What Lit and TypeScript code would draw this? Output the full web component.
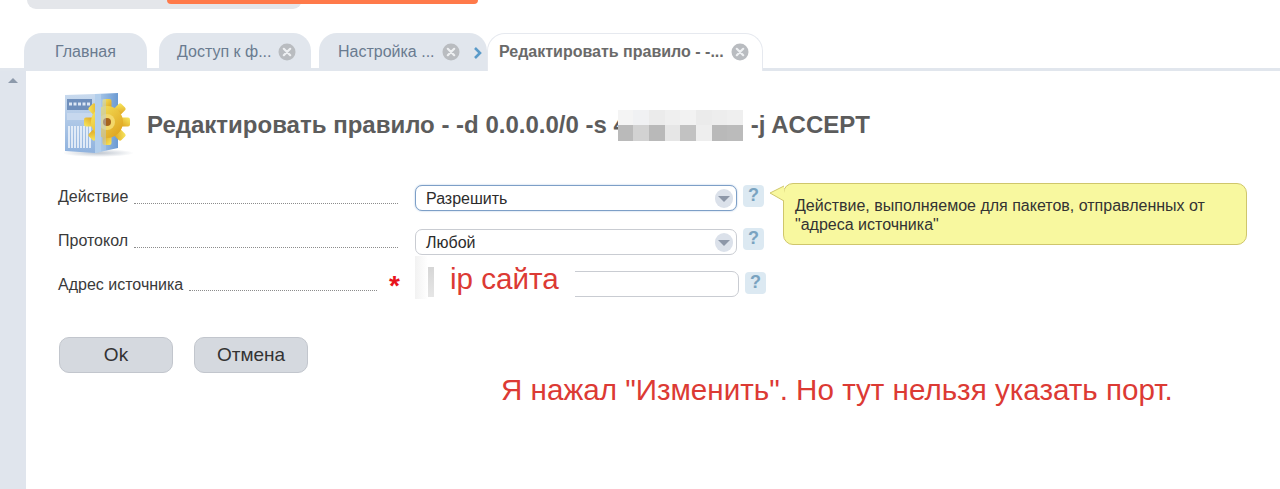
import { LitElement, html, css, svg } from "lit";
import { customElement } from "lit/decorators.js";

const closeIcon = html`<svg class="close" viewBox="0 0 18 18"><circle cx="9" cy="9" r="8.5" fill="#b9bcc0"/><path d="M5.8 5.8l6.4 6.4M12.2 5.8l-6.4 6.4" stroke="#eef0f2" stroke-width="2.2" stroke-linecap="round"/></svg>`;

const topCells = ["#f4f4f4", "#f0f1f3", "#ebebeb", "#efefef", "#f2f2f2", "#ebebeb", "#ededed", "#efefef"];
const bottomCells = ["#bababa", "#d2d2d2", "#b9b9b9", "#e6e6e6", "#c2c2c2", "#eeeeee", "#b9b9b9", "#bbbbbb"];

const teeth = [0, 45, 90, 135, 180, 225, 270, 315];
const serverIcon = html`<svg class="icon" viewBox="0 0 72 70">
  <defs>
    <linearGradient id="front" x1="0" y1="0" x2="0" y2="1"><stop offset="0" stop-color="#c9daee"/><stop offset="1" stop-color="#8fb2de"/></linearGradient>
    <linearGradient id="side" x1="0" y1="0" x2="1" y2="0"><stop offset="0" stop-color="#b3cfec"/><stop offset="1" stop-color="#6b9ad2"/></linearGradient>
    <linearGradient id="gear" x1="0" y1="0" x2="1" y2="1"><stop offset="0" stop-color="#f8ea62"/><stop offset="1" stop-color="#dc9c18"/></linearGradient>
    <radialGradient id="shadow"><stop offset="0" stop-color="#8a97a8" stop-opacity=".55"/><stop offset="1" stop-color="#8a97a8" stop-opacity="0"/></radialGradient>
  </defs>
  <ellipse cx="34" cy="62" rx="36" ry="4" fill="url(#shadow)"/>
  <path d="M1 4L31 3V62L1 60Z" fill="url(#front)"/>
  <path d="M31 3L54 2V57L31 62Z" fill="url(#side)"/>
  <rect x="3" y="8" width="25" height="11" fill="#6f8fbc"/>
  <path d="M5 13h21" stroke="#dce6f4" stroke-width="3" stroke-dasharray="3 1.5"/>
  <rect x="3" y="22" width="25" height="7" fill="#c7d8ee"/>
  <path d="M5 35V57M8 35V57M11 35V57M14 35V57M17 35V57M20 35V57M23 35V57M26 35V57" stroke="#f1f6fc" stroke-width="1.6"/>
  <g transform="translate(43 31)">
    ${teeth.map((a) => svg`<rect x="-4.5" y="-23" width="9" height="11" rx="2" fill="url(#gear)" transform="rotate(${a})"/>`)}
    <circle r="16" fill="url(#gear)"/>
    <circle r="8" fill="#f3d86a"/>
    <circle r="4" fill="#a8641c"/>
  </g>
  <path d="M31 3H37V61L31 62Z" fill="#b3cfec"/>
  <path d="M37 8H42V60L37 60Z" fill="#b3cfec" opacity=".45"/>
</svg>`;

@customElement("app-root")
export class AppRoot extends LitElement {
  static styles = css`
    :host { display: block; width: 1280px; height: 489px; overflow: hidden; background: #fff; position: relative; font-family: "Liberation Sans", Arial, sans-serif; color: #333; }
    .top { height: 33px; padding-left: 27px; overflow: hidden; box-sizing: border-box; }
    .pill { width: 275px; height: 9px; background: #e4e6ea; border-radius: 0 0 22px 22px; padding-left: 140px; box-sizing: border-box; }
    .pill div { width: 311px; height: 4px; background: #ff7a4a; border-radius: 0 0 10px 10px; }

    .tabs { display: flex; align-items: flex-end; height: 35px; padding-left: 24px; border-bottom: 3px solid #e1e6ed; }
    .tab { height: 35px; box-sizing: border-box; background: #e1e6ed; border-radius: 18px 18px 0 0; display: flex; align-items: center; font-size: 16px; color: #6a7b90; white-space: nowrap; padding-top: 2px; }
    .t1 { width: 123px; padding-left: 31px; margin-right: 12px; }
    .t2 { width: 152px; padding-left: 18px; margin-right: 8px; }
    .t3 { width: 168px; padding-left: 19px; }
    .close { width: 18px; height: 18px; flex: none; margin-left: 7px; }
    .chev { width: 10px; height: 14px; flex: none; margin-left: 13px; margin-top: 2px; }
    .active { width: 276px; height: 38px; margin-bottom: -3px; background: #fff; border: 1px solid #e6e9ef; border-bottom: none; padding: 0 0 1px 11px; font-size: 16px; font-weight: bold; color: #6a6a6a; }

    .body { display: flex; height: 418px; }
    .side { width: 26px; flex: none; background: #e0e5ed; display: flex; justify-content: center; padding-top: 7px; box-sizing: border-box; }
    .up { width: 0; height: 0; border-left: 5px solid transparent; border-right: 5px solid transparent; border-bottom: 5px solid #8d9aab; }
    .main { flex: 1; padding: 21px 0 0 32px; }

    .head { display: flex; align-items: center; height: 68px; margin-left: 6px; }
    .icon { width: 72px; height: 70px; flex: none; margin-right: 11px; }
    h1 { margin: -2px 0 0; font-size: 24px; font-weight: bold; color: #5c5c5c; display: flex; align-items: center; white-space: nowrap; }
    .patch { display: grid; grid-template-columns: repeat(8, 15.625px); grid-template-rows: 15px 16px; margin: 0 8px 0 -9px; position: relative; }

    form { margin: 25px 0 0; }
    .row { display: flex; align-items: flex-start; height: 26px; font-size: 16px; }
    .row + .row { margin-top: 18px; }
    .row.addr { margin-top: 16px; }
    .label { width: 340px; display: flex; align-items: flex-end; height: 26px; flex: none; padding-bottom: 5px; box-sizing: border-box; color: #3a3a3a; }
    .dots { flex: 1; border-bottom: 1px dotted #8c8c8c; margin: 0 0 0 6px; height: 0; position: relative; top: -2px; }
    .addr .label { width: 319px; padding-bottom: 3px; }
    .addr .dots { top: -3px; }
    .star { width: 38px; flex: none; box-sizing: border-box; padding-left: 12px; color: #e8141c; font-size: 28px; font-weight: bold; line-height: 29px; height: 26px; }
    .gap { width: 17px; flex: none; }
    .select { width: 322px; height: 26px; box-sizing: border-box; border: 1px solid #c9ccd2; border-radius: 7px; display: flex; align-items: center; justify-content: space-between; padding: 0 3px 0 10px; font-size: 16px; color: #2c2c2c; background: #fff; flex: none; }
    .select span.txt { position: relative; top: 1px; }
    .select.focus { border: 1px solid #7d9fc7; box-shadow: 0 0 2px #a9c2df; }
    .arrow { width: 18px; height: 19px; border-radius: 9px; background: #dbe1ea; display: flex; align-items: center; justify-content: center; }
    .arrow i { display: block; width: 0; height: 0; margin-top: 2px; border-left: 6px solid transparent; border-right: 6px solid transparent; border-top: 6px solid #8d97a8; }
    .input { width: 324px; height: 26px; box-sizing: border-box; border: 1px solid #c9ccd2; border-radius: 7px; flex: none; background: #fff; }
    .help { width: 21px; height: 22px; margin-left: 6px; border-radius: 4px; background: #dce9f2; color: #7aa3c0; font: bold 18px/21px "Liberation Sans", Arial, sans-serif; text-align: center; flex: none; }
    .addr .help { margin-top: 1px; }
    .row:nth-child(2) .help { margin-top: -1px; }

    .buttons { display: flex; gap: 21px; margin: 40px 0 0 1px; }
    .btn { width: 114px; height: 36px; box-sizing: border-box; background: #d5d9df; border: 1px solid #c2c6cd; border-radius: 10px; font-size: 19px; color: #333; display: flex; align-items: center; justify-content: center; }

    .tip { position: absolute; left: 783px; top: 183px; width: 464px; height: 62px; box-sizing: border-box; background: #f8f89f; border: 1px solid #cfc66c; border-radius: 10px; padding: 12px 11px 0; font-size: 16px; line-height: 19px; color: #333; }
    .tip svg { position: absolute; left: -14px; top: 1px; width: 15px; height: 17px; }
    .wipe { position: absolute; left: 415px; top: 256px; width: 160px; height: 43px; background: linear-gradient(90deg, #f2f2f2 0, #fff 8%, #fff 100%); }
    .smudge { position: absolute; left: 428px; top: 267px; width: 6px; height: 30px; background: linear-gradient(#d6d6d6, #e6e6e6); }
    .ip { position: absolute; left: 450px; top: 263px; font-size: 29.6px; line-height: 31px; color: #dc3a34; }
    .note { position: absolute; left: 501px; top: 375px; font-size: 29.6px; line-height: 30px; color: #dc3a34; white-space: nowrap; }
  `;

  render() {
    return html`
      <div class="top"><div class="pill"><div></div></div></div>
      <div class="tabs">
        <div class="tab t1">Главная</div>
        <div class="tab t2">Доступ к ф...${closeIcon}</div>
        <div class="tab t3">Настройка ...${closeIcon}
          <svg class="chev" viewBox="0 0 10 14"><path d="M2 2l5 5-5 5" fill="none" stroke="#5b9bc9" stroke-width="2.6"/></svg>
        </div>
        <div class="tab active">Редактировать правило - -...${closeIcon}</div>
      </div>
      <div class="body">
        <div class="side"><div class="up"></div></div>
        <div class="main">
          <div class="head">
            ${serverIcon}
            <h1>
              <span>Редактировать правило - -d 0.0.0.0/0 -s 4</span>
              <span class="patch">
                ${[...topCells, ...bottomCells].map((c) => html`<span style="background:${c}"></span>`)}
              </span>
              <span>-j ACCEPT</span>
            </h1>
          </div>
          <form>
            <div class="row">
              <div class="label">Действие<span class="dots"></span></div>
              <div class="gap"></div>
              <div class="select focus"><span class="txt">Разрешить</span><span class="arrow"><i></i></span></div>
              <div class="help">?</div>
            </div>
            <div class="row">
              <div class="label">Протокол<span class="dots"></span></div>
              <div class="gap"></div>
              <div class="select"><span class="txt">Любой</span><span class="arrow"><i></i></span></div>
              <div class="help">?</div>
            </div>
            <div class="row addr">
              <div class="label">Адрес источника<span class="dots"></span></div>
              <div class="star">*</div>
              <div class="input"></div>
              <div class="help">?</div>
            </div>
          </form>
          <div class="buttons">
            <div class="btn">Ok</div>
            <div class="btn">Отмена</div>
          </div>
        </div>
      </div>
      <div class="tip">
        <svg viewBox="0 0 15 17"><path d="M0 8L14 1V16Z" fill="#f8f89f"/><path d="M14 1L0 8L14 16" fill="none" stroke="#cfc66c"/></svg>
        Действие, выполняемое для пакетов, отправленных от<br />"адреса источника"
      </div>
      <div class="wipe"></div>
      <div class="smudge"></div>
      <div class="ip">ip сайта</div>
      <div class="note">Я нажал "Изменить". Но тут нельзя указать порт.</div>
    `;
  }
}
